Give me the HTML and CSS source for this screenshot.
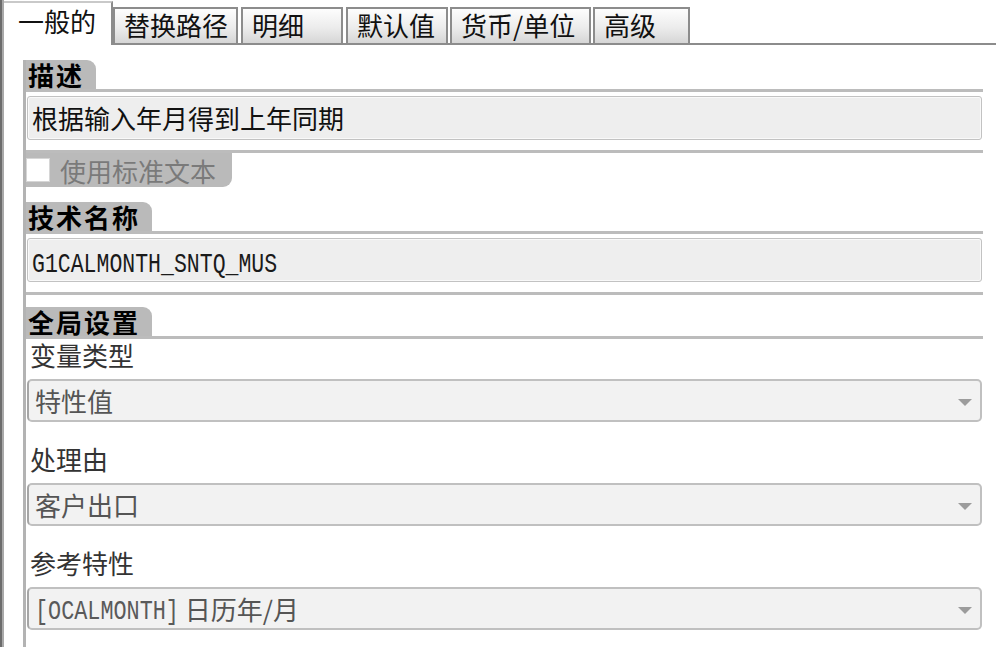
FILE: index.html
```html
<!DOCTYPE html>
<html lang="zh-CN">
<head>
<meta charset="utf-8">
<title>一般的</title>
<link rel="stylesheet" href="styles.css">
</head>
<body>
<div class="window">
  <div class="tabbar">
    <div class="tab tab-active">一般的</div>
    <div class="tab tab-replace">替换路径</div>
    <div class="tab tab-detail">明细</div>
    <div class="tab tab-default">默认值</div>
    <div class="tab tab-currency">货币/单位</div>
    <div class="tab tab-adv">高级</div>
  </div>
  <div class="content">
    <div class="group-title">描述</div>
    <div class="group-body">
      <div class="field">根据输入年月得到上年同期</div>
    </div>
    <div class="check-tab"><span class="checkbox"></span><span>使用标准文本</span></div>

    <div class="group-title group-title-tech">技术名称</div>
    <div class="group-body">
      <div class="field"><span class="mono">G1CALMONTH_SNTQ_MUS</span></div>
    </div>

    <div class="group-title group-title-global">全局设置</div>
    <div class="group-body group-body-open">
      <div class="label">变量类型</div>
      <div class="select"><span>特性值</span><span class="arrow"></span></div>
      <div class="label">处理由</div>
      <div class="select"><span>客户出口</span><span class="arrow"></span></div>
      <div class="label">参考特性</div>
      <div class="select"><span><span class="mono mono-sel">[OCALMONTH]</span> 日历年/月</span><span class="arrow"></span></div>
    </div>
  </div>
</div>
</body>
</html>
```

FILE: styles.css
```css
* { box-sizing: border-box; margin: 0; padding: 0; }
html, body { width: 996px; height: 647px; overflow: hidden; background: #fff; }
body { font-family: "Noto Sans CJK SC", "Noto Sans", sans-serif; color: #111; font-size: 26px; }

.window {
  height: 647px;
  border-left: 2px solid #6c6c6c;
  box-shadow: inset 2px 0 0 #a9a9a9;
  padding-left: 2px;
}

.tabbar {
  display: flex;
  align-items: flex-end;
  height: 45px;
  border-bottom: 2px solid #8c8c8c;
}

.tab {
  height: 36px;
  border: 2px solid #8c8c8c;
  border-bottom: none;
  background: linear-gradient(to bottom, #fdfdfd 0%, #ececec 55%, #d6d6d6 100%);
  padding-left: 9px;
  font-size: 26px;
  line-height: 32px;
  white-space: nowrap;
  color: #111;
}

.tab-active {
  width: 109px;
  height: 44px;
  margin-bottom: -2px;
  background: #fff;
  border-left: none;
  border-top: 2px solid #c9c9c9;
  border-right: 2px solid #8c8c8c;
  padding-left: 14px;
  line-height: 36px;
}
.tab-replace { width: 125px; }
.tab-detail { width: 102px; margin-left: 3px; }
.tab-default { width: 102px; margin-left: 3px; }
.tab-currency { width: 141px; margin-left: 2px; }
.tab-adv { width: 97px; margin-left: 2px; }

.content {
  margin-left: 19px;
  margin-top: 15px;
  width: 960px;
  height: 587px;
  border-left: 3px solid #b3b3b3;
}

.group-title {
  width: fit-content;
  height: 29px;
  background: #bababa;
  border-top-right-radius: 9px;
  padding: 0 12px 0 2px;
  font-weight: 700;
  font-size: 26px;
  line-height: 29px;
  letter-spacing: 2px;
  color: #000;
}
.group-title-tech { margin-top: 15px; }
.group-title-global { margin-top: 12px; }

.group-body {
  border-top: 3px solid #bcbcbc;
  border-bottom: 3px solid #bcbcbc;
  padding: 4px 1px 10px;
}
.group-body-open { border-bottom: none; padding: 1px 1px 0; }

.field {
  height: 44px;
  background: #eeeeee;
  border: 1px solid #c2c2c2;
  border-radius: 3px;
  box-shadow: inset 0 0 0 1px #f9f9f9;
  padding-left: 4px;
  font-size: 26px;
  line-height: 41px;
  color: #111;
  white-space: nowrap;
}

.mono {
  display: inline-block;
  font-family: "Liberation Mono", "DejaVu Sans Mono", monospace;
  font-size: 21.5px;
  line-height: 30px;
  transform: scaleY(1.3);
  vertical-align: middle;
  color: #1a1a1a;
}
.mono-sel { color: #5a5a5a; font-size: 21.8px; }

.check-tab {
  display: flex;
  align-items: center;
  gap: 10px;
  width: 206px;
  height: 34px;
  background: #bababa;
  border-bottom-right-radius: 9px;
  font-size: 26px;
  color: #7a7a7a;
}
.checkbox {
  width: 24px;
  height: 24px;
  background: #fff;
  border: 1px solid #d6d6d6;
}

.label {
  padding-left: 3px;
  font-size: 26px;
  line-height: 30px;
  color: #333;
  margin-bottom: 9px;
}

.select {
  display: flex;
  align-items: center;
  height: 43px;
  margin-bottom: 22px;
  background: #f2f2f2;
  border: 2px solid #c0c0c0;
  border-left-color: #a6a6a6;
  border-radius: 5px;
  padding: 0 8px 0 6px;
  font-size: 26px;
  color: #555;
  white-space: nowrap;
}
.arrow {
  margin-left: auto;
  width: 0;
  height: 0;
  border-left: 7px solid transparent;
  border-right: 7px solid transparent;
  border-top: 7px solid #9c9c9c;
  margin-top: 3px;
}
```
